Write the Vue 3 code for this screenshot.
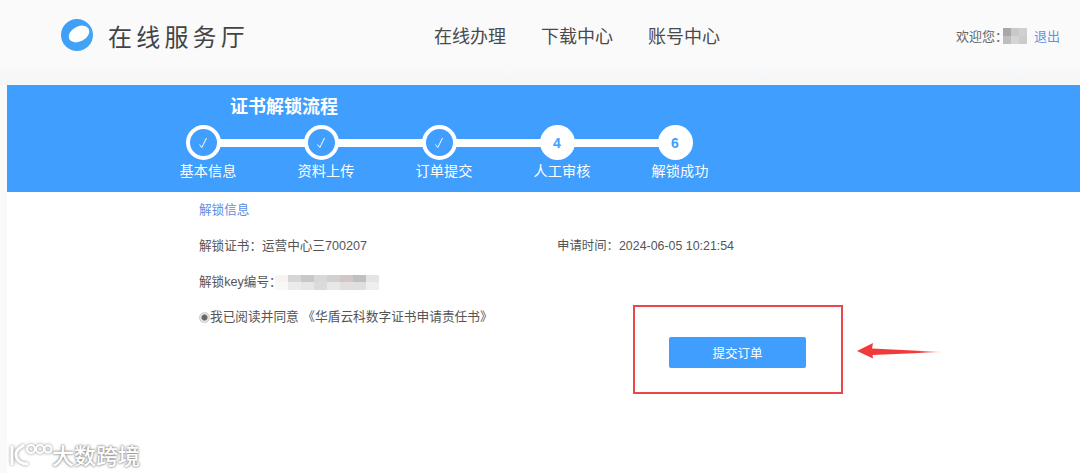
<template>
  <div class="page">
    <header class="topbar">
      <div class="brand">
        <svg class="logo" width="32" height="32" viewBox="0 0 32 32">
          <defs>
            <linearGradient id="ring" x1="0" y1="0" x2="1" y2="0.6">
              <stop offset="0" stop-color="#3f9bf7" />
              <stop offset="1" stop-color="#42a5f5" />
            </linearGradient>
          </defs>
          <circle cx="16" cy="16" r="16" fill="url(#ring)" />
          <ellipse cx="18" cy="15" rx="11" ry="7.500" transform="rotate(-28 18 15)" fill="#fff" />
        </svg>
        <span class="brand-name">在线服务厅</span>
      </div>
      <nav class="nav">
        <a v-for="item in navItems" :key="item">{{ item }}</a>
      </nav>
      <div class="user">
        <span>欢迎您{{ colon }}</span>
        <div class="mosaic user-mosaic">
          <i v-for="(c, i) in userCells" :key="i" :style="{ background: c }"></i>
        </div>
        <a class="logout">退出</a>
      </div>
    </header>

    <main class="main">
      <section class="band">
        <h1 class="band-title">证书解锁流程</h1>
        <ol class="steps">
          <li v-for="(step, i) in steps" :key="step.label" class="step" :class="{ last: i === steps.length - 1 }">
            <span class="dot" :class="{ done: step.done }">
              <svg v-if="step.done" width="10" height="12" viewBox="0 0 10 12">
                <path d="M1.500 7.500 3.800 10.500 8.500 1" fill="none" stroke="#fff" stroke-width="1" />
              </svg>
              <template v-else>{{ step.num }}</template>
            </span>
            <span class="step-label">{{ step.label }}</span>
          </li>
        </ol>
      </section>

      <section class="info">
        <div class="info-title">解锁信息</div>
        <div class="info-row first">
          <span class="cert">解锁证书{{ colon }}运营中心三700207</span>
          <span class="apply-time">申请时间{{ colon }}2024-06-05 10:21:54</span>
        </div>
        <div class="info-row key">
          <span>解锁key编号{{ colon }}</span>
          <div class="mosaic key-mosaic">
            <i v-for="(c, i) in keyCells" :key="i" :style="{ background: c }"></i>
          </div>
        </div>
        <label class="agree">
          <span class="radio"></span>
          <span>我已阅读并同意 《华盾云科数字证书申请责任书》</span>
        </label>
        <button class="submit" type="button">提交订单</button>
      </section>

      <div class="callout"></div>
      <svg class="arrow" width="88" height="20" viewBox="0 0 88 20">
        <defs>
          <linearGradient id="tail" x1="0" y1="0" x2="1" y2="0">
            <stop offset="0" stop-color="#f33a3a" />
            <stop offset="0.7" stop-color="#f33a3a" />
            <stop offset="1" stop-color="#f33a3a" stop-opacity="0.15" />
          </linearGradient>
        </defs>
        <path d="M0 10 16 2 15 7.500 86 11 15.500 14 16 17.500z" fill="url(#tail)" />
      </svg>

      <div class="watermark">
        <svg class="wm-mark" width="45" height="28" viewBox="0 0 45 28" fill="none" stroke="#fff">
          <path d="M5 6V25" stroke-width="3" />
          <path d="M17 5C10 9 8 13 9 16c1 5 6 8 12 8" stroke-width="3" />
          <circle cx="24" cy="9" r="4" stroke-width="2" />
          <circle cx="33" cy="9" r="4" stroke-width="2" />
          <circle cx="41" cy="9" r="3.500" stroke-width="2" />
        </svg>
        <span>大数跨境</span>
      </div>
    </main>
  </div>
</template>

<script setup>
// 全角冒号
const colon = '\uFF1A'

const navItems = ['在线办理', '下载中心', '账号中心']

const steps = [
  { label: '基本信息', done: true },
  { label: '资料上传', done: true },
  { label: '订单提交', done: true },
  { label: '人工审核', num: 4 },
  { label: '解锁成功', num: 6 },
]

// 打码区块的颜色
const userCells = ['#a8a8a8', '#c8c8c8', '#d0d0d0', '#bebebe', '#d4d4d4', '#cbcbcb']
const keyCells = [
  '#f8f2f0', '#d6d6d6', '#c8c8c8', '#d8d8d8', '#d0d0d0', '#cfc8c6', '#c0c0c0', '#e4e4e4',
  '#f8f8f8', '#ebebeb', '#e6e6e6', '#dbdbdb', '#e8e8e8', '#e2dfde', '#dfdfdf', '#eeeeee',
]
</script>

<style>
html,
body {
  margin: 0;
  background: #f9f9fa;
}
</style>

<style scoped>
.page {
  width: 1080px;
  height: 473px;
  overflow: hidden;
  font-family: "Liberation Sans", "Noto Sans CJK SC", sans-serif;
  color: #555;
}

.topbar {
  height: 85px;
  box-sizing: border-box;
  padding-bottom: 15px;
  display: grid;
  grid-template-columns: 434px 522px 1fr;
  align-items: center;
  background: linear-gradient(#fafafb 70%, #f5f6f7);
}

.brand {
  display: flex;
  align-items: center;
  gap: 15px;
  padding-left: 61px;
}

.brand-name {
  font-size: 24px;
  letter-spacing: 4.200px;
  color: #444;
}

.nav {
  display: flex;
  gap: 35px;
  font-size: 18px;
  color: #4a4a4a;
}

.user {
  display: flex;
  align-items: center;
  font-size: 13px;
  color: #666;
}

.mosaic {
  display: grid;
  filter: blur(0.700px);
}

.mosaic i {
  display: block;
}

.user-mosaic {
  grid-template-columns: repeat(3, 8px);
  grid-auto-rows: 8px;
  margin: 2px 7px 0 -5px;
}

.logout {
  color: #5b93e6;
}

.main {
  position: relative;
  height: 388px;
  margin-left: 7px;
  background: #fff;
}

.band {
  height: 107px;
  box-sizing: border-box;
  padding: 10px 0 0 137px;
  background: #409eff;
  color: #fff;
}

.band-title {
  margin: 0 0 5px 86px;
  font-size: 18px;
  line-height: 25px;
  font-weight: 700;
}

.steps {
  display: flex;
  margin: 0;
  padding: 0;
  list-style: none;
}

.step {
  position: relative;
  width: 118px;
  display: flex;
  flex-direction: column;
  align-items: center;
}

.step::before {
  content: "";
  position: absolute;
  left: 59px;
  top: 14px;
  width: 118px;
  height: 8px;
  background: #fff;
}

.step.last::before {
  display: none;
}

.dot {
  position: relative;
  width: 35px;
  height: 35px;
  box-sizing: border-box;
  border-radius: 50%;
  display: flex;
  align-items: center;
  justify-content: center;
  background: #fff;
  color: #409eff;
  font-size: 14px;
  font-weight: 700;
}

.dot.done {
  background: #409eff;
  border: 4px solid #fff;
}

.step-label {
  margin: 1px 0 0 10px;
  font-size: 14.200px;
  line-height: 20px;
  white-space: nowrap;
}

.info {
  padding: 9px 0 0 192px;
  font-size: 12.600px;
  line-height: 18px;
  color: #555;
}

.info-title {
  color: #5b8fe0;
}

.info-row {
  display: flex;
  align-items: center;
}

.info-row.first {
  margin-top: 18px;
}

.cert {
  width: 358px;
}

.apply-time {
  font-size: 12.400px;
}

.info-row.key {
  margin-top: 18px;
}

.key-mosaic {
  grid-template-columns: repeat(8, 13px);
  grid-auto-rows: 7.500px;
  margin-left: -7px;
}

.agree {
  display: flex;
  align-items: center;
  margin-top: 17px;
  font-size: 12.700px;
}

.radio {
  width: 11px;
  height: 11px;
  box-sizing: border-box;
  border: 1px solid #ccc;
  border-radius: 50%;
  background: radial-gradient(circle, #666 0 2.500px, #e4e4e4 3.500px);
}

.submit {
  display: block;
  width: 137px;
  height: 31px;
  margin: 11px 0 0 470px;
  padding: 0;
  border: none;
  border-radius: 2px;
  background: #409eff;
  color: #fff;
  font: 12.500px "Liberation Sans", "Noto Sans CJK SC", sans-serif;
}

.callout {
  position: absolute;
  left: 626px;
  top: 220px;
  width: 206px;
  height: 85px;
  border: 2px solid #e9474a;
}

.arrow {
  position: absolute;
  left: 850px;
  top: 256px;
}

.watermark {
  position: absolute;
  left: 0;
  top: 353px;
  display: flex;
  align-items: center;
  color: #fff;
  font-size: 22px;
  font-weight: 500;
  text-shadow: 0 0 3px #888, 0 0 2px #888;
}

.wm-mark {
  filter: drop-shadow(0 0 1.500px #888);
}
</style>
